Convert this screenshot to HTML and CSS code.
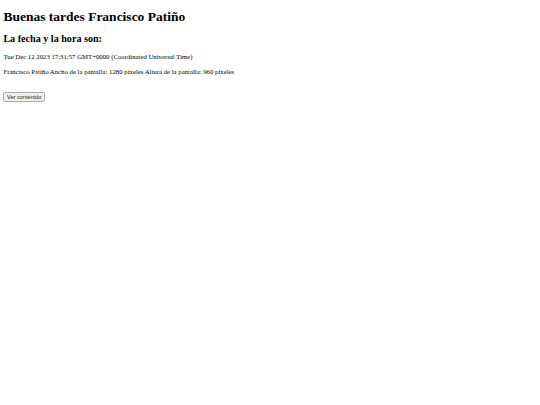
FILE: index.html
```html
<!DOCTYPE html>
<html lang="es">
<head>
<meta charset="utf-8">
<title>Saludo</title>
<link rel="stylesheet" href="styles.css">
</head>
<body class="page">
<h1 class="title">Buenas tardes Francisco Patiño</h1>
<h2 class="subtitle">La fecha y la hora son:</h2>
<p class="text">Tue Dec 12 2023 17:31:57 GMT+0000 (Coordinated Universal Time)</p>
<p class="text">Francisco Patiño Ancho de la pantalla: 1280 pixeles Altura de la pantalla: 960 pixeles</p>
<div class="actions">
<button class="btn">Ver contenido</button>
</div>
</body>
</html>
```
FILE: styles.css
```css
html { background: #fff; }
.page {
  margin: 3.375px;
  font-family: "Liberation Serif", "Times New Roman", serif;
  font-size: 6.75px;
  color: #000;
}
.title {
  font-size: 13.5px;
  margin: 6px 0 8px;
  font-weight: bold;
}
.subtitle {
  font-size: 10.125px;
  margin: 7.4px 0 8.4px;
  font-weight: bold;
}
.text {
  font-size: 6.75px;
  margin: 7.75px 0;
}
.actions {
  padding-top: 9.3px;
}
.btn {
  font-family: "Liberation Sans", Arial, sans-serif;
  font-size: 5.625px;
  padding: 1px 2.6px;
  border: 1px solid #a8a8a8;
  border-radius: 1.5px;
  background: #f0f0f0;
  color: #222;
  margin: 0;
}
```
